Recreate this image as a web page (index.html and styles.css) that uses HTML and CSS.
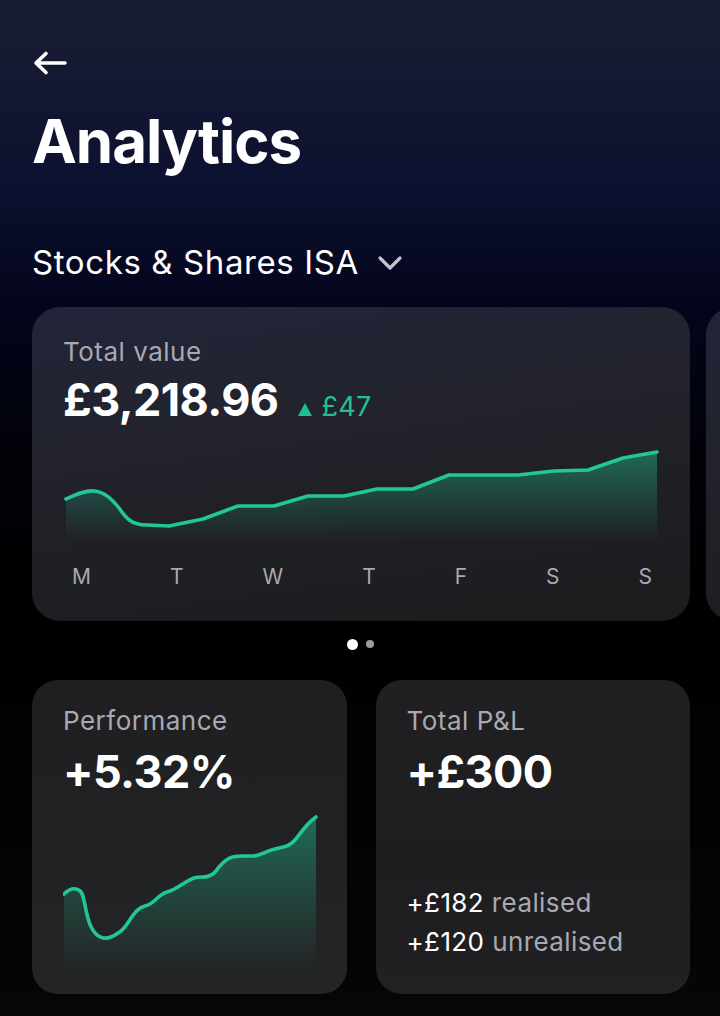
FILE: index.html
```html
<!DOCTYPE html>
<html lang="en">
<head>
<meta charset="utf-8">
<title>Analytics</title>
<link rel="stylesheet" href="styles.css">
</head>
<body>
<div class="page">
  <header class="top">
    <svg class="back" width="36" height="26" viewBox="0 0 36 26" aria-hidden="true">
      <path d="M33 13H4.5M14 3.5L4 13l10 9.5" fill="none" stroke="#fff" stroke-width="3.6" stroke-linecap="round" stroke-linejoin="round"/>
    </svg>
    <h1 class="title">Analytics</h1>
    <div class="account">
      <span>Stocks &amp; Shares ISA</span>
      <svg class="chev" width="26" height="16" viewBox="0 0 26 16" aria-hidden="true">
        <path d="M3 3l10 10L23 3" fill="none" stroke="#c4c5ce" stroke-width="3.2" stroke-linecap="round" stroke-linejoin="round"/>
      </svg>
    </div>
  </header>

  <div class="carousel">
    <section class="card main-card">
      <div class="label">Total value</div>
      <div class="value-row">
        <span class="value">£3,218.96</span>
        <span class="delta"><span class="tri"></span>£47</span>
      </div>
      <svg class="chart-week" width="597" height="110" viewBox="0 0 597 110" aria-hidden="true">
        <defs>
          <linearGradient id="gw" x1="0" y1="10" x2="0" y2="102" gradientUnits="userSpaceOnUse">
            <stop offset="0" stop-color="#22c493" stop-opacity="0.45"/>
            <stop offset="1" stop-color="#22c493" stop-opacity="0"/>
          </linearGradient>
        </defs>
        <path d="M3 60 C12 56 22 51 31 52 C41 53 48 59 56 69 C63 79 68 86 84 86 L106 87 L140 80 L175 67 L211 67 L245 57 L281 57 L314 50 L350 50 L386 36 L455 36 L491 32 L525 31 L560 19 L594 13 L594 104 L3 104 Z" fill="url(#gw)"/>
        <path d="M3 60 C12 56 22 51 31 52 C41 53 48 59 56 69 C63 79 68 86 84 86 L106 87 L140 80 L175 67 L211 67 L245 57 L281 57 L314 50 L350 50 L386 36 L455 36 L491 32 L525 31 L560 19 L594 13" fill="none" stroke="#21c796" stroke-width="3.6" stroke-linecap="round" stroke-linejoin="round"/>
      </svg>
      <div class="days">
        <span>M</span><span>T</span><span>W</span><span>T</span><span>F</span><span>S</span><span>S</span>
      </div>
    </section>
    <section class="card main-card"></section>
  </div>

  <div class="dots"><span class="dot on"></span><span class="dot"></span></div>

  <div class="grid">
    <section class="card small-card">
      <div class="label">Performance</div>
      <div class="value">+5.32%</div>
      <svg class="chart-perf" width="256" height="160" viewBox="0 0 256 160" aria-hidden="true">
        <defs>
          <linearGradient id="gp" x1="0" y1="8" x2="0" y2="160" gradientUnits="userSpaceOnUse">
            <stop offset="0" stop-color="#22c493" stop-opacity="0.45"/>
            <stop offset="1" stop-color="#22c493" stop-opacity="0"/>
          </linearGradient>
        </defs>
        <path d="M1 87 C5 83 9 81 13 82 C19 83 20 88 22 98 C25 115 29 128 40 131 C47 132 52 128 58 124 C66 118 70 102 82 99 C92 97 94 88 104 85 C112 83 116 79 123 75 C130 71 132 70 140 70 C148 70 152 66 156 60 C164 51 168 49 180 49 L190 49 C198 49 202 44 212 42 C220 40 226 40 232 33 C238 26 242 18 253 10 L253 160 L1 160 Z" fill="url(#gp)"/>
        <path d="M1 87 C5 83 9 81 13 82 C19 83 20 88 22 98 C25 115 29 128 40 131 C47 132 52 128 58 124 C66 118 70 102 82 99 C92 97 94 88 104 85 C112 83 116 79 123 75 C130 71 132 70 140 70 C148 70 152 66 156 60 C164 51 168 49 180 49 L190 49 C198 49 202 44 212 42 C220 40 226 40 232 33 C238 26 242 18 253 10" fill="none" stroke="#21c796" stroke-width="3.6" stroke-linecap="round" stroke-linejoin="round"/>
      </svg>
    </section>
    <section class="card small-card pl">
      <div class="label">Total P&amp;L</div>
      <div class="value">+£300</div>
      <div class="breakdown">
        <div class="line"><span class="amt">+£182</span> <span class="muted">realised</span></div>
        <div class="line"><span class="amt">+£120</span> <span class="muted">unrealised</span></div>
      </div>
    </section>
  </div>
</div>
</body>
</html>
```

FILE: styles.css
```css
* { box-sizing: border-box; }
html, body {
  margin: 0;
  padding: 0;
}
body {
  width: 720px;
  height: 1016px;
  overflow: hidden;
  font-family: Inter, "Noto Sans", "Liberation Sans", sans-serif;
  color: #fff;
  background: linear-gradient(180deg, #191d33 0%, #0d1130 18%, #03051c 30%, #010207 45%, #000000 62%, #050608 100%);
}
.page {
  padding: 0 0 0 32px;
  overflow: hidden;
}
.top {
  padding-top: 50px;
}
.back {
  display: block;
}
.title {
  margin: 28px 0 0 0;
  font-size: 60px;
  line-height: 74px;
  font-weight: 700;
  letter-spacing: -1px;
}
.account {
  margin-top: 64px;
  display: flex;
  align-items: center;
  gap: 18px;
  font-size: 33px;
  line-height: 40px;
  font-weight: 400;
  letter-spacing: 0.6px;
}
.chev {
  display: block;
  margin-top: 2px;
}
.carousel {
  margin-top: 25px;
  display: flex;
  gap: 16px;
  overflow: hidden;
}
.card {
  border-radius: 28px;
  flex: none;
}
.main-card {
  width: 658px;
  height: 314px;
  padding: 29px 0 0 31px;
  background: linear-gradient(172deg, #22253a 0%, #212229 45%, #1c1c1e 100%);
}
.label {
  font-size: 26px;
  line-height: 32px;
  color: #a9a9b1;
  letter-spacing: 0.5px;
}
.value-row {
  display: flex;
  align-items: baseline;
  margin-top: 6px;
}
.value {
  font-size: 45px;
  line-height: 52px;
  font-weight: 700;
  letter-spacing: -0.6px;
}
.delta {
  display: flex;
  align-items: baseline;
  margin-left: 20px;
  font-size: 27px;
  color: #1fc28f;
  letter-spacing: 0.3px;
}
.tri {
  width: 0;
  height: 0;
  border-left: 7.5px solid transparent;
  border-right: 7.5px solid transparent;
  border-bottom: 13px solid #1fc28f;
  margin-right: 9px;
}
.chart-week {
  display: block;
  margin-top: 13px;
}
.days {
  display: flex;
  justify-content: space-between;
  width: 580px;
  margin: 16px 0 0 9px;
  font-size: 21px;
  line-height: 24px;
  color: #a9a9b1;
}
.dots {
  display: flex;
  justify-content: center;
  align-items: center;
  gap: 8px;
  height: 12px;
  margin: 17px 0 0 -32px;
}
.dot {
  width: 8px;
  height: 8px;
  border-radius: 50%;
  background: #9c9c9f;
}
.dot.on {
  width: 11px;
  height: 11px;
  background: #fff;
}
.grid {
  margin-top: 30px;
  width: 658px;
  display: grid;
  grid-template-columns: 1fr 1fr;
  gap: 29px;
}
.small-card {
  height: 314px;
  border-radius: 26px;
  padding: 25px 0 0 31px;
  background: linear-gradient(180deg, #1f1f21 0%, #212224 60%, #242527 100%);
  display: flex;
  flex-direction: column;
}
.small-card .value {
  margin-top: 9px;
}
.chart-perf {
  display: block;
  margin-top: 9px;
}
.pl {
  background: linear-gradient(180deg, #202022 0%, #1e1e20 60%, #212123 100%);
}
.breakdown {
  margin-top: auto;
  padding-bottom: 33px;
  font-size: 26px;
  line-height: 39px;
  letter-spacing: 0.4px;
}
.amt { color: #fff; }
.muted { color: #a9a9b1; }
```
